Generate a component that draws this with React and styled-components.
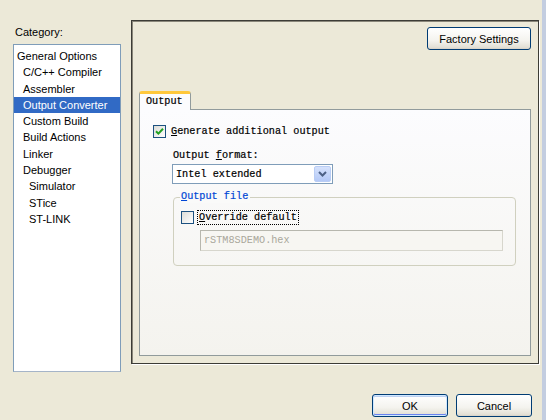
import styled, { createGlobalStyle } from "styled-components";

const Global = createGlobalStyle`
  html, body { margin: 0; padding: 0; background: #ece9d8; }
  body { font-family: "Liberation Sans", Arial, sans-serif; font-size: 11px; color: #000; }
`;

const Window = styled.div`
  width: 542px;
  height: 420px;
  display: flex;
  background: #ece9d8;
  border-right: 4px solid #c3cde0;
  overflow: hidden;
`;

const LeftCol = styled.div`
  padding: 26px 0 0 13px;
  width: 108px;
  display: flex;
  flex-direction: column;
`;

const Caption = styled.div`
  height: 13px;
  line-height: 13px;
  margin-bottom: 5px;
  margin-left: 2px;
`;

const CategoryList = styled.ul`
  margin: 0;
  padding: 3px 0 0;
  list-style: none;
  height: 328px;
  box-sizing: border-box;
  background: #fff;
  border: 1px solid #7f9db9;
  border-bottom-color: #a5b4c8;
`;

const Item = styled.li`
  height: 16.3px;
  line-height: 16.3px;
  padding-left: ${(p) => 3 + p.$level * 6}px;
  white-space: nowrap;
  background: ${(p) => (p.$selected ? "#316ac5" : "transparent")};
  color: ${(p) => (p.$selected ? "#fff" : "#000")};
`;

const RightCol = styled.div`
  margin-left: 10px;
  padding-top: 20px;
  display: flex;
  flex-direction: column;
`;

const Frame = styled.div`
  width: 408px;
  height: 344px;
  box-sizing: border-box;
  border: 1px solid #3c3c36;
  box-shadow: inset 1px 1px 0 #8a877a, 1px 1px 0 #fff;
  padding: 6px 6px 7px 7px;
  display: flex;
  flex-direction: column;
`;

const TopBar = styled.div`
  display: flex;
  justify-content: flex-end;
  padding-right: 1px;
`;

const XpButton = styled.button`
  font-family: "Liberation Sans", Arial, sans-serif;
  font-size: 11px;
  color: #000;
  height: 23px;
  width: ${(p) => p.$w}px;
  padding: 0;
  border: 1px solid #003c74;
  border-radius: 3px;
  background: linear-gradient(#ffffff 0%, #f4f3ee 60%, #e3e0d6 92%, #d6d0c5 100%);
  box-shadow: ${(p) =>
    p.$default ? "inset 0 0 0 1px #cee7ff, inset 0 -1px 0 1px #6982ee, inset 0 1px 0 1px #bccfef" : "none"};
`;

const TabArea = styled.div`
  margin-top: 41px;
  display: flex;
  flex-direction: column;
`;

const TabStrip = styled.div`
  display: flex;
  height: 18px;
`;

const Tab = styled.div`
  position: relative;
  z-index: 1;
  width: 52px;
  height: 19px;
  box-sizing: border-box;
  border: 1px solid #919b9c;
  border-bottom: none;
  border-top: 3px solid #ffc83c;
  border-radius: 3px 3px 0 0;
  background: #fcfcfe;
  font-family: "Liberation Mono", monospace;
  font-size: 10.2px;
  line-height: 15px;
  padding-left: 6px;
  -webkit-text-stroke: 0.2px #000;
`;

const Page = styled.div`
  height: 247px;
  width: 392px;
  box-sizing: border-box;
  border: 1px solid #919b9c;
  background: linear-gradient(#fcfcfe, #f4f3ee);
  padding: 15px 0 0 13px;
  display: flex;
  flex-direction: column;
  font-family: "Liberation Mono", monospace;
  font-size: 10.2px;
  -webkit-text-stroke: 0.2px currentColor;
`;

const CheckRow = styled.div`
  display: flex;
  align-items: center;
  height: 13px;
  gap: 4px;
`;

const Box = styled.div`
  width: 13px;
  height: 13px;
  box-sizing: border-box;
  border: 1px solid #1c5180;
  background: linear-gradient(135deg, #dcdcd7, #ffffff);
  display: flex;
  align-items: center;
  justify-content: center;
`;

const CheckLabel = styled.span`
  line-height: 13px;
  padding: 0 1px;
  outline: ${(p) => (p.$focus ? "1px dotted #000" : "none")};
  outline-offset: 0px;
`;

const FieldLabel = styled.div`
  margin: 12px 0 0 20px;
  line-height: 12px;
  height: 12px;
`;

const Combo = styled.div`
  margin: 2px 0 0 19px;
  width: 161px;
  height: 20px;
  box-sizing: border-box;
  border: 1px solid #7f9db9;
  background: #fff;
  display: flex;
  align-items: center;
  justify-content: space-between;
  padding: 0 1px 0 3px;
`;

const DropButton = styled.div`
  width: 17px;
  height: 16px;
  border: 1px solid #b9cdf5;
  border-radius: 2px;
  box-sizing: border-box;
  background: linear-gradient(#d6e2fc, #b4c9f7);
  display: flex;
  align-items: center;
  justify-content: center;
`;

const Group = styled.div`
  position: relative;
  margin: 13px 0 0 20px;
  width: 343px;
  height: 69px;
  box-sizing: border-box;
  border: 1px solid #d0d0bf;
  border-radius: 4px;
  padding: 13px 0 0 7px;
  display: flex;
  flex-direction: column;
`;

const Legend = styled.div`
  position: absolute;
  top: -7px;
  left: 6px;
  padding: 0 2px 0 1px;
  background: #fafaf9;
  color: #0046d5;
  line-height: 12px;
`;

const TextInput = styled.div`
  margin: 6px 0 0 19px;
  width: 303px;
  height: 21px;
  box-sizing: border-box;
  border: 1px solid #b7b7ae;
  border-right-color: #d7d6cd;
  border-bottom-color: #d7d6cd;
  background: #f7f6f2;
  color: #a9a79b;
  padding-left: 3px;
  line-height: 19px;
  -webkit-text-stroke: 0;
`;

const ButtonRow = styled.div`
  margin-top: 30px;
  display: flex;
  justify-content: flex-end;
  gap: 8px;
  padding-right: 7px;
`;

const Check = () => (
  <svg width="9" height="9" viewBox="0 0 9 9">
    <path d="M1 4.2 L3.4 6.6 L8 1.8" fill="none" stroke="#21a121" strokeWidth="2" />
  </svg>
);

const Chevron = () => (
  <svg width="9" height="6" viewBox="0 0 9 6">
    <path d="M1 1 L4.5 4.5 L8 1" fill="none" stroke="#4d6185" strokeWidth="2" />
  </svg>
);

const categories = [
  ["General Options", 0],
  ["C/C++ Compiler", 1],
  ["Assembler", 1],
  ["Output Converter", 1, true],
  ["Custom Build", 1],
  ["Build Actions", 1],
  ["Linker", 1],
  ["Debugger", 1],
  ["Simulator", 2],
  ["STice", 2],
  ["ST-LINK", 2],
];

export default function App() {
  return (
    <>
      <Global />
      <Window>
        <LeftCol>
          <Caption>Category:</Caption>
          <CategoryList>
            {categories.map(([name, level, sel]) => (
              <Item key={name} $level={level} $selected={sel}>
                {name}
              </Item>
            ))}
          </CategoryList>
        </LeftCol>
        <RightCol>
          <Frame>
            <TopBar>
              <XpButton $w={104}>Factory Settings</XpButton>
            </TopBar>
            <TabArea>
              <TabStrip>
                <Tab>Output</Tab>
              </TabStrip>
              <Page>
                <CheckRow>
                  <Box>
                    <Check />
                  </Box>
                  <CheckLabel>
                    <u>G</u>enerate additional output
                  </CheckLabel>
                </CheckRow>
                <FieldLabel>
                  Output <u>f</u>ormat:
                </FieldLabel>
                <Combo>
                  <span>Intel extended</span>
                  <DropButton>
                    <Chevron />
                  </DropButton>
                </Combo>
                <Group>
                  <Legend>
                    <u>O</u>utput file
                  </Legend>
                  <CheckRow>
                    <Box />
                    <CheckLabel $focus>
                      <u>O</u>verride default
                    </CheckLabel>
                  </CheckRow>
                  <TextInput>rSTM8SDEMO.hex</TextInput>
                </Group>
              </Page>
            </TabArea>
          </Frame>
          <ButtonRow>
            <XpButton $w={76} $default>
              OK
            </XpButton>
            <XpButton $w={76}>Cancel</XpButton>
          </ButtonRow>
        </RightCol>
      </Window>
    </>
  );
}
